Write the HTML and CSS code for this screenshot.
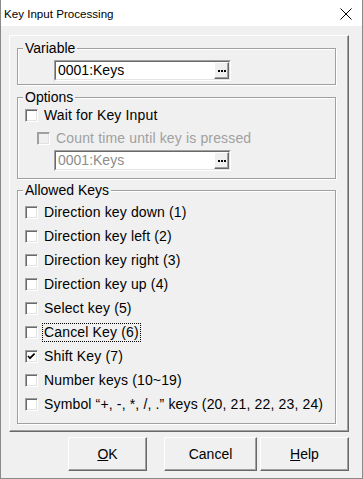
FILE: index.html
```html
<!DOCTYPE html>
<html>
<head>
    <title>Key Input Processing</title>
    <link rel="stylesheet" href="styles.css">
</head>
<body>
    <!-- Title bar -->
    <div class="titlebar">
        <span class="title">Key Input Processing</span>
        <svg class="close" width="12" height="12" viewBox="0 0 12 12">
            <path d="M0.5 0.5 L11.5 11.5 M11.5 0.5 L0.5 11.5" stroke="#000" stroke-width="1" fill="none"/>
        </svg>
    </div>

    <div class="client">
        <div class="frame">

            <!-- Variable -->
            <div class="group group-variable">
                <div class="group-title">Variable</div>
                <div class="field">
                    <div class="field-inner">
                        <span class="field-text">0001:Keys</span>
                        <span class="dots-button"><i></i><i></i><i></i></span>
                    </div>
                </div>
            </div>

            <!-- Options -->
            <div class="group group-options">
                <div class="group-title">Options</div>
                <div class="group-body">
                    <div class="check-row row-small">
                        <span class="box"></span>
                        <span>Wait for Key Input</span>
                    </div>
                    <div class="check-row row-small row-indent disabled">
                        <span class="box"></span>
                        <span>Count time until key is pressed</span>
                    </div>
                    <div class="field field-disabled">
                        <div class="field-inner">
                            <span class="field-text">0001:Keys</span>
                            <span class="dots-button"><i></i><i></i><i></i></span>
                        </div>
                    </div>
                </div>
            </div>

            <!-- Allowed Keys -->
            <div class="group group-keys">
                <div class="group-title">Allowed Keys</div>
                <div class="group-body key-list">
                    <div class="check-row"><span class="box"></span><span>Direction key down (1)</span></div>
                    <div class="check-row"><span class="box"></span><span>Direction key left (2)</span></div>
                    <div class="check-row"><span class="box"></span><span>Direction key right (3)</span></div>
                    <div class="check-row"><span class="box"></span><span>Direction key up (4)</span></div>
                    <div class="check-row"><span class="box"></span><span>Select key (5)</span></div>
                    <div class="check-row"><span class="box"></span><span class="focused">Cancel Key (6)</span></div>
                    <div class="check-row">
                        <span class="box">
                            <svg width="11" height="11" viewBox="0 0 11 11">
                                <path d="M2 5 L4 7.2 L8.6 2.6" stroke="#000" stroke-width="1.7" fill="none"/>
                            </svg>
                        </span>
                        <span>Shift Key (7)</span>
                    </div>
                    <div class="check-row"><span class="box"></span><span>Number keys (10~19)</span></div>
                    <div class="check-row"><span class="box"></span><span>Symbol “+, -, *, /, .” keys (20, 21, 22, 23, 24)</span></div>
                </div>
            </div>
        </div>

        <!-- Dialog buttons -->
        <div class="buttons">
            <button class="dlg-button btn-ok"><u>O</u>K</button>
            <button class="dlg-button btn-cancel">Cancel</button>
            <button class="dlg-button btn-help"><u>H</u>elp</button>
        </div>
    </div>
</body>
</html>
```

FILE: styles.css
```css
/* Window */
body {
    margin: 0;
    width: 363px;
    height: 479px;
    box-sizing: border-box;
    border: 1px solid #8a8a8a;
    border-top: none;
    background-color: #f0f0f0;
    font-family: "Liberation Sans", Arial, sans-serif;
    font-size: 14px;
    color: #000;
    overflow: hidden;
}

.titlebar {
    height: 26px;
    background-color: #fff;
    display: flex;
    align-items: center;
    justify-content: space-between;
    padding: 0 10px 0 3px;
}

.title {
    font-size: 11.6px;
}

.close {
    display: block;
    margin-top: 2px;
}

.client {
    padding: 9px 0 0 8px;
}

/* Raised outer frame */
.frame {
    width: 340px;
    height: 397px;
    box-sizing: border-box;
    border: 1px solid;
    border-color: #fff #696969 #696969 #fff;
    box-shadow: inset -1px -1px #a0a0a0;
    padding: 12px 0 0 7px;
}

/* Etched group boxes */
.group {
    width: 319px;
    box-sizing: border-box;
    border: 1px solid #a0a0a0;
    box-shadow: 1px 1px #fff, inset 1px 1px #fff;
}

.group-title {
    display: table;
    margin: -9px 0 0 5px;
    padding: 0 2px;
    line-height: 17px;
    background-color: #f0f0f0;
}

.group-body {
    padding-left: 7px;
}

.group-variable {
    padding-bottom: 3px;
}

.group-variable .field {
    margin: 3px 0 0 36px;
}

.group-options {
    margin-top: 12px;
    padding-bottom: 7px;
}

.group-options .field {
    margin: 3px 0 0 29px;
}

.group-keys {
    margin-top: 11px;
    padding-bottom: 7px;
}

.key-list {
    margin-top: 1px;
}

/* Checkboxes */
.check-row {
    display: flex;
    align-items: center;
    height: 24px;
    white-space: nowrap;
    letter-spacing: 0.15px;
}

.row-small {
    height: 18px;
}

.row-indent {
    margin: 5px 0 0 12px;
}

.box {
    width: 13px;
    height: 13px;
    box-sizing: border-box;
    margin-right: 6px;
    flex: none;
    background-color: #fff;
    border: 1px solid;
    border-color: #a0a0a0 #fff #fff #a0a0a0;
    box-shadow: inset 1px 1px #696969, inset -1px -1px #e3e3e3;
    position: relative;
}

.box svg {
    display: block;
    position: absolute;
    left: 0;
    top: 0;
}

.disabled {
    color: #a0a0a0;
}

.disabled .box {
    background-color: #f0f0f0;
    box-shadow: inset 1px 1px #a0a0a0, inset -1px -1px #e3e3e3;
}

.focused {
    outline: 1px dotted #000;
    outline-offset: 0;
    line-height: 17px;
    padding: 0 1px;
    margin-left: -1px;
}

/* Text fields with "..." button */
.field {
    width: 177px;
    box-sizing: border-box;
    border: 1px solid;
    border-color: #a0a0a0 #fff #fff #a0a0a0;
}

.field-inner {
    display: flex;
    height: 17px;
    background-color: #fff;
    border: 1px solid;
    border-color: #696969 #e3e3e3 #e3e3e3 #696969;
}

.field-text {
    flex: 1;
    padding-left: 2px;
    line-height: 17px;
}

.field-disabled .field-text {
    color: #8c8c8c;
}

.dots-button {
    width: 15px;
    box-sizing: border-box;
    background-color: #f0f0f0;
    border: 1px solid;
    border-color: #fff #696969 #696969 #fff;
    box-shadow: inset -1px -1px #a0a0a0;
    display: flex;
    justify-content: center;
    align-items: center;
    gap: 1px;
    padding-top: 1px;
}

.dots-button i {
    width: 2px;
    height: 2px;
    background-color: #000;
}

/* Dialog buttons */
.buttons {
    display: flex;
    margin: 5px 0 0 59px;
}

.dlg-button {
    height: 34px;
    box-sizing: border-box;
    background-color: #f0f0f0;
    border: 1px solid;
    border-color: #fff #696969 #696969 #fff;
    box-shadow: inset -1px -1px #a0a0a0;
    font-family: "Liberation Sans", Arial, sans-serif;
    font-size: 14px;
    color: #000;
    padding: 0;
}

.btn-ok {
    width: 79px;
}

.btn-cancel {
    width: 93px;
    margin-left: 17px;
}

.btn-help {
    width: 89px;
    margin-left: 3px;
}
```
